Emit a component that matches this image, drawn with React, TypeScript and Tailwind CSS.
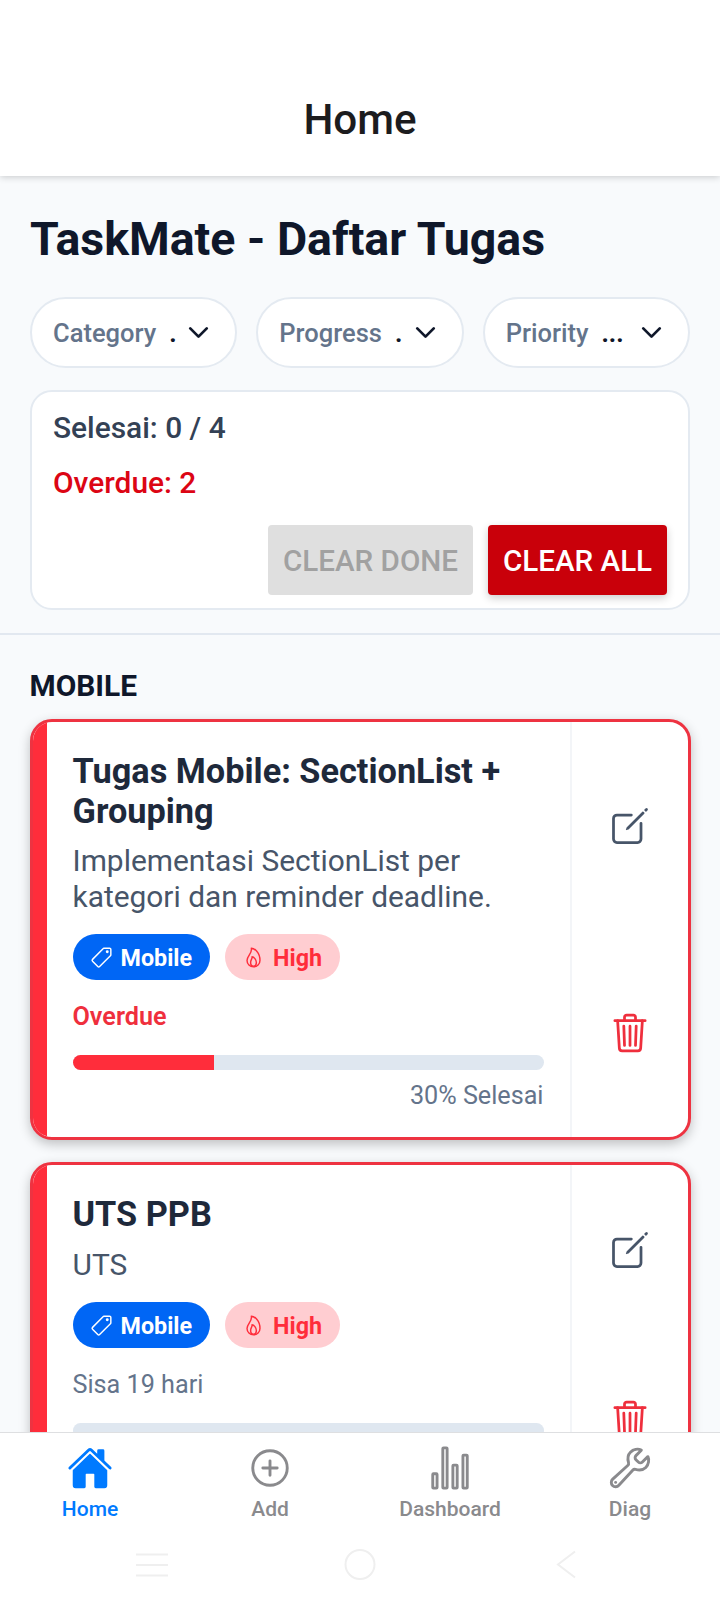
import type { ReactNode } from "react";
import {
  IoAddCircleOutline,
  IoBuildOutline,
  IoCreateOutline,
  IoFlameOutline,
  IoHome,
  IoPricetagOutline,
  IoStatsChartOutline,
  IoTrashOutline,
} from "react-icons/io5";
import { FiChevronDown } from "react-icons/fi";

type Task = {
  title: string;
  description: string;
  category: string;
  priority: string;
  deadline: string;
  overdue: boolean;
  progress: number;
};

const tasks: Task[] = [
  {
    title: "Tugas Mobile: SectionList + Grouping",
    description: "Implementasi SectionList per kategori dan reminder deadline.",
    category: "Mobile",
    priority: "High",
    deadline: "Overdue",
    overdue: true,
    progress: 30,
  },
  {
    title: "UTS PPB",
    description: "UTS",
    category: "Mobile",
    priority: "High",
    deadline: "Sisa 19 hari",
    overdue: false,
    progress: 0,
  },
];

function FilterChip({ label, value }: { label: string; value: string }) {
  return (
    <button className="flex h-[71px] min-w-0 flex-1 items-center rounded-full border-2 border-[#e4eaf1] bg-white pl-[21px] text-left text-[25.5px] font-medium">
      <span className="pt-0.5 text-[#64748b]">{label}</span>
      <span className="ml-[13px] flex-1 pt-0.5 font-bold text-[#0f172a]">{value}</span>
      <FiChevronDown size={33} className="mr-5 shrink-0 text-[#0f172a]" />
    </button>
  );
}

function TaskCard({ task }: { task: Task }) {
  return (
    <article className="flex shrink-0 overflow-hidden rounded-[22px] border-3 border-[#ee3341] bg-white shadow-[0_4px_12px_rgba(0,0,0,0.24)]">
      <div className="w-[14.5px] shrink-0 bg-[#ff2d3b]" />
      <div className="flex-1 pt-[30px] pr-[26px] pb-[26px] pl-[25.5px]">
        <h3 className="text-[34.3px] leading-[39.5px] font-bold text-[#1e293b]">{task.title}</h3>
        <p className="mt-3 text-[29.9px] leading-[35.5px] text-[#475569]">{task.description}</p>
        <div className="mt-5 flex gap-[15px] text-[23.3px] font-bold">
          <span className="flex h-[46px] items-center gap-2 rounded-full bg-[#0066f5] pr-[18px] pl-[17px] text-white">
            <IoPricetagOutline size={23} />
            <span className="pt-0.5">{task.category}</span>
          </span>
          <span className="flex h-[46px] items-center gap-2 rounded-full bg-[#ffcdd1] pr-[18px] pl-[17px] text-[#ff2d3b]">
            <IoFlameOutline size={23} />
            <span className="pt-0.5">{task.priority}</span>
          </span>
        </div>
        <p
          className={
            task.overdue
              ? "mt-[22px] text-[25.2px] leading-[30px] font-semibold text-[#ef2f3d]"
              : "mt-[22px] text-[25.2px] leading-[30px] text-[#64748b]"
          }
        >
          {task.deadline}
        </p>
        <div className="mt-[23px] h-[15px] overflow-hidden rounded-full bg-[#dfe7f0]">
          <div className="h-full bg-[#ff2d3b]" style={{ width: `${task.progress}%` }} />
        </div>
        <p className="mt-[11px] h-[30px] text-right text-[25.2px] leading-[30px] text-[#64748b]">
          {task.progress > 0 && `${task.progress}% Selesai`}
        </p>
      </div>
      <div className="flex w-[118px] shrink-0 flex-col border-l-2 border-[#f3f5f8]">
        <button className="flex flex-1 items-center justify-center text-[#475569]">
          <IoCreateOutline size={44} />
        </button>
        <button className="flex flex-1 items-center justify-center text-[#ef2f3d]">
          <IoTrashOutline size={44} />
        </button>
      </div>
    </article>
  );
}

function Tab({ icon, label, active }: { icon: ReactNode; label: string; active?: boolean }) {
  return (
    <button
      className={
        active
          ? "flex flex-1 flex-col items-center text-[#007aff]"
          : "flex flex-1 flex-col items-center text-[#8a8a8d]"
      }
    >
      {icon}
      <span className="mt-[5px] text-[21px] leading-[26px] font-medium">{label}</span>
    </button>
  );
}

export default function App() {
  return (
    <div className="flex h-[1600px] w-[720px] flex-col overflow-hidden bg-[#f8fafc] font-[Roboto,sans-serif]">
      <header className="relative h-[176px] shrink-0 bg-white pt-[90px] text-center text-[42.2px] leading-[60px] font-medium text-[#1c1c1e] shadow-[0_1px_7px_rgba(0,0,0,0.2)]">
        Home
      </header>

      <section className="shrink-0 border-b-2 border-[#e2e8f0] px-[30px] pt-[33px] pb-[23px]">
        <h1 className="text-[46.5px] leading-[60px] font-bold text-[#0f172a]">TaskMate - Daftar Tugas</h1>
        <div className="mt-7 flex gap-[19px]">
          <FilterChip label="Category" value="." />
          <FilterChip label="Progress" value="." />
          <FilterChip label="Priority" value="..." />
        </div>
        <div className="mt-[22px] h-[220px] rounded-[22px] border-2 border-[#e4eaf1] bg-white px-[21px] pt-4">
          <p className="text-[29.9px] leading-10 font-medium text-[#334155]">Selesai: 0 / 4</p>
          <p className="mt-[15px] text-[29.9px] leading-10 font-medium text-[#dc0514]">Overdue: 2</p>
          <div className="mt-[22px] flex justify-end gap-[15px] text-[29.6px] font-medium">
            <button className="h-[70px] w-[205px] rounded-[4px] bg-[#dfdfdf] pt-0.5 whitespace-nowrap text-[#a1a1a1]">
              CLEAR DONE
            </button>
            <button className="h-[70px] w-[179px] rounded-[4px] bg-[#c9000a] pt-0.5 whitespace-nowrap text-white shadow-[0_3px_8px_rgba(0,0,0,0.2)]">
              CLEAR ALL
            </button>
          </div>
        </div>
      </section>

      <main className="flex min-h-0 flex-1 flex-col overflow-hidden px-[29.5px] pt-[31px]">
        <h2 className="shrink-0 text-[29.9px] leading-10 font-bold text-[#0f172a]">MOBILE</h2>
        <div className="mt-[13px] flex flex-col gap-[22px]">
          {tasks.map((task) => (
            <TaskCard key={task.title} task={task} />
          ))}
        </div>
      </main>

      <nav className="relative flex h-[100px] shrink-0 border-t border-[#dedfe1] bg-white pt-3">
        <Tab icon={<IoHome size={46} />} label="Home" active />
        <Tab icon={<IoAddCircleOutline size={46} />} label="Add" />
        <Tab icon={<IoStatsChartOutline size={46} />} label="Dashboard" />
        <Tab icon={<IoBuildOutline size={46} />} label="Diag" />
      </nav>

      <footer className="flex h-[68px] shrink-0 justify-between bg-white px-[136px] pt-[16px] text-[#efefef]">
        <svg width="32" height="32" viewBox="0 0 32 32" fill="none" stroke="currentColor" strokeWidth="2">
          <path d="M0 6.5h32M0 17h32M0 27.5h32" />
        </svg>
        <svg width="32" height="32" viewBox="0 0 32 32" fill="none" stroke="currentColor" strokeWidth="2">
          <circle cx="16" cy="16.5" r="14.5" />
        </svg>
        <svg width="32" height="32" viewBox="0 0 32 32" fill="none" stroke="currentColor" strokeWidth="2">
          <path d="M23 3.5 6 16.5 23 29.5" />
        </svg>
      </footer>
    </div>
  );
}
